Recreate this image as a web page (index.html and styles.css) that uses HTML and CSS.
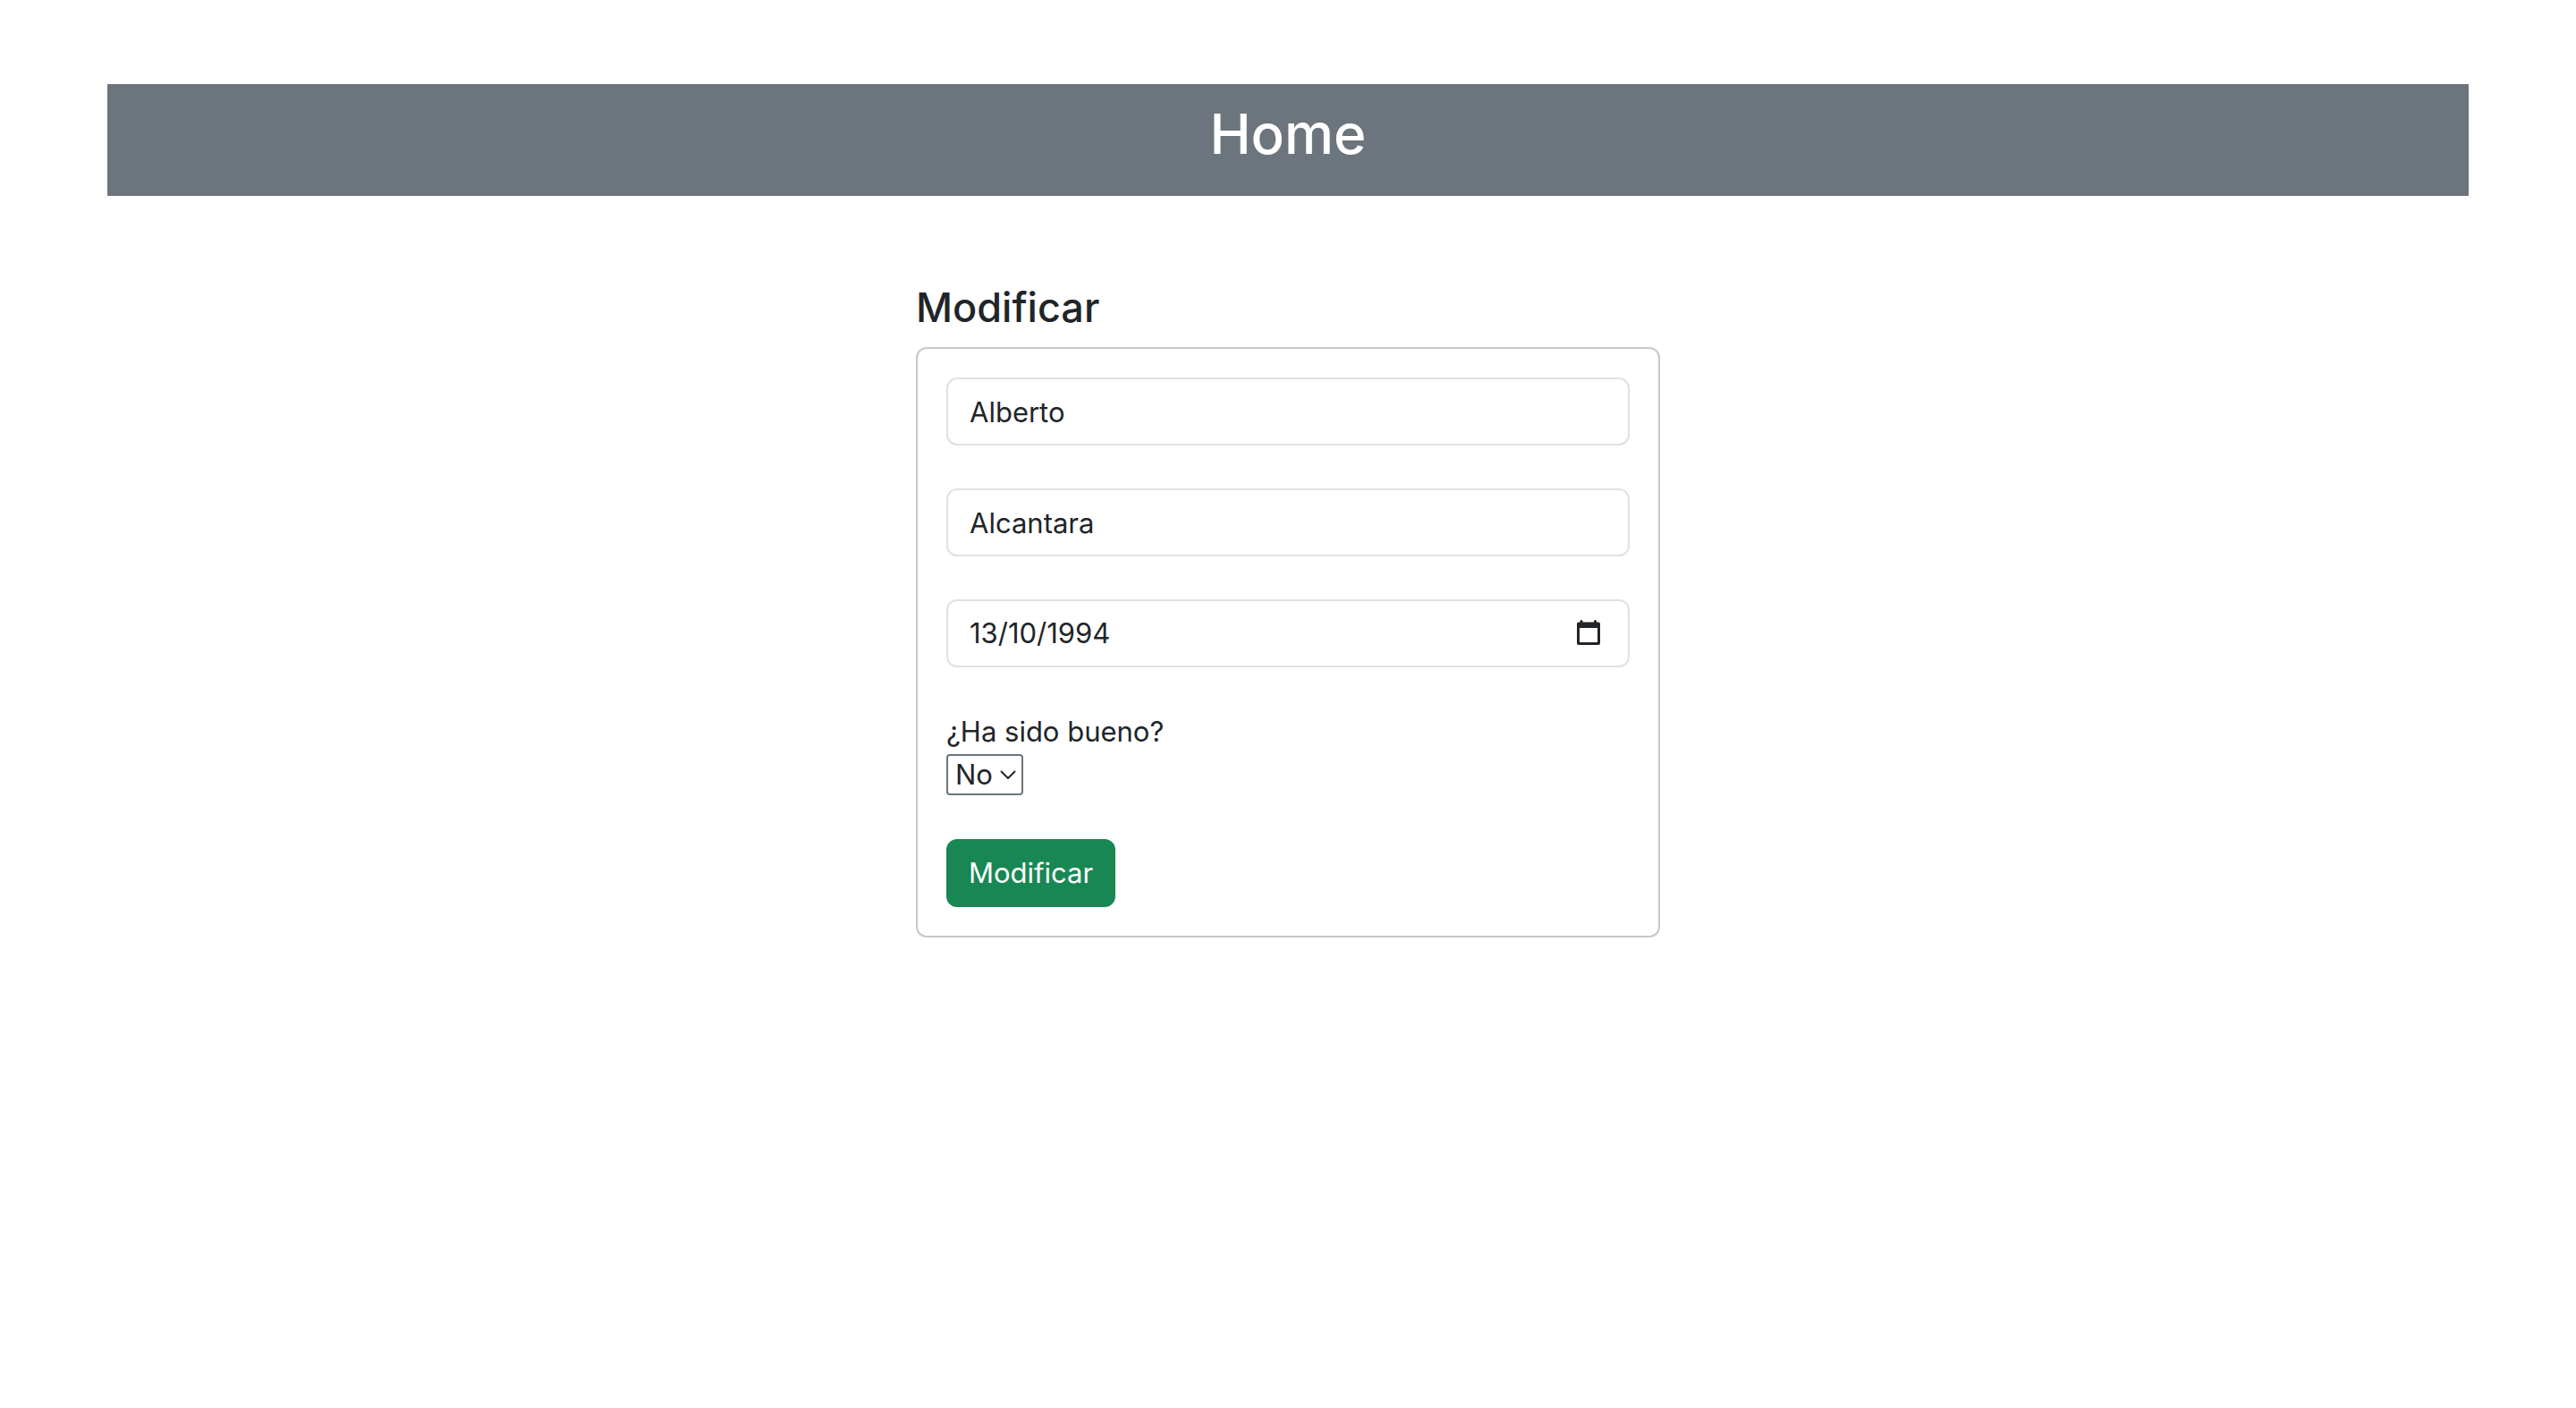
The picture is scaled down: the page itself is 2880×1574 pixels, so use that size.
FILE: index.html
```html
<!DOCTYPE html>
<html lang="es">
<head>
  <meta charset="utf-8">
  <meta name="viewport" content="width=device-width, initial-scale=1">
  <title>Modificar</title>
  <link rel="stylesheet" href="styles.css">
</head>
<body>
  <header class="banner">
    <h1 class="banner-title">Home</h1>
  </header>
  <main class="content">
    <h2 class="form-title">Modificar</h2>
    <form class="card">
      <input class="field" type="text" name="nombre" value="Alberto" aria-label="Nombre">
      <input class="field" type="text" name="apellido" value="Alcantara" aria-label="Apellido">
      <div class="field date-field">
        <input class="date-input" type="text" inputmode="numeric" name="fecha" value="13/10/1994" aria-label="Fecha de nacimiento">
        <button class="date-button" type="button" aria-label="Abrir calendario">
          <svg width="26" height="30" viewBox="0 0 26 30" fill="currentColor" aria-hidden="true">
            <path fill-rule="evenodd" d="M3.500 1.500a1.500 1.500 0 0 1 3 0V2.500h12.500V1.500a1.500 1.500 0 0 1 3 0V2.500h2A2 2 0 0 1 26 4.500v21.500a2 2 0 0 1-2 2h-22A2 2 0 0 1 0 26v-21.500A2 2 0 0 1 2 2.500h1.500zM3 9v16h20v-16z"/>
          </svg>
        </button>
      </div>
      <div class="question">
        <label class="question-label" for="bueno">¿Ha sido bueno?</label>
        <div class="select-box">
          <select class="select" id="bueno" name="bueno">
            <option>No</option>
            <option>Sí</option>
          </select>
          <svg class="select-arrow" width="18" height="10" viewBox="0 0 18 10" fill="none" stroke="currentColor" stroke-width="2" aria-hidden="true">
            <path d="M1 1l8 8 8-8"/>
          </svg>
        </div>
      </div>
      <button class="submit" type="submit">Modificar</button>
    </form>
  </main>
</body>
</html>
```

FILE: styles.css
```css
*,
*::before,
*::after {
  box-sizing: border-box;
}

body {
  margin: 0;
  padding: 94px 120px 48px;
  background: #fff;
  color: #212529;
  font-family: Inter, "Liberation Sans", sans-serif;
  font-size: 31px;
  line-height: 48px;
}

input,
select,
button {
  margin: 0;
  color: inherit;
  font: inherit;
}

.banner {
  padding: 16px 16px 30px;
  background: #6c757d;
  color: #fff;
  text-align: center;
}

.banner-title {
  margin: 0;
  font-size: 62px;
  font-weight: 500;
  line-height: 79px;
}

.content {
  width: calc(100% / 3);
  margin: 95px auto 0;
  padding: 0 24px;
}

.form-title {
  margin: 0 0 14px;
  font-size: 45px;
  font-weight: 500;
  line-height: 60px;
}

.card {
  display: flex;
  flex-direction: column;
  align-items: flex-start;
  gap: 48px;
  padding: 32px;
  border: 2px solid #c8c8c8;
  border-radius: 12px;
}

.field {
  width: 100%;
  height: 76px;
  padding: 12px 24px;
  border: 2px solid #dee2e6;
  border-radius: 12px;
  background: #fff;
}

.date-field {
  display: flex;
  align-items: center;
  padding-right: 31px;
}

.date-input {
  flex: 1;
  min-width: 0;
  padding: 0;
  border: 0;
  background: none;
}

.date-button {
  display: flex;
  padding: 0;
  border: 0;
  background: none;
}

.question {
  display: flex;
  flex-direction: column;
  align-items: flex-start;
}

.select-box {
  position: relative;
  display: flex;
  align-items: center;
  height: 48px;
}

.select {
  width: 86px;
  height: 46px;
  padding: 0 8px;
  border: 2px solid #6c757d;
  border-radius: 4px;
  background: #fff;
  line-height: 42px;
  appearance: none;
}

.select-arrow {
  position: absolute;
  right: 8px;
  pointer-events: none;
}

.submit {
  height: 76px;
  padding: 12px 23px;
  border: 2px solid #198754;
  border-radius: 12px;
  background: #198754;
  color: #fff;
}
```
